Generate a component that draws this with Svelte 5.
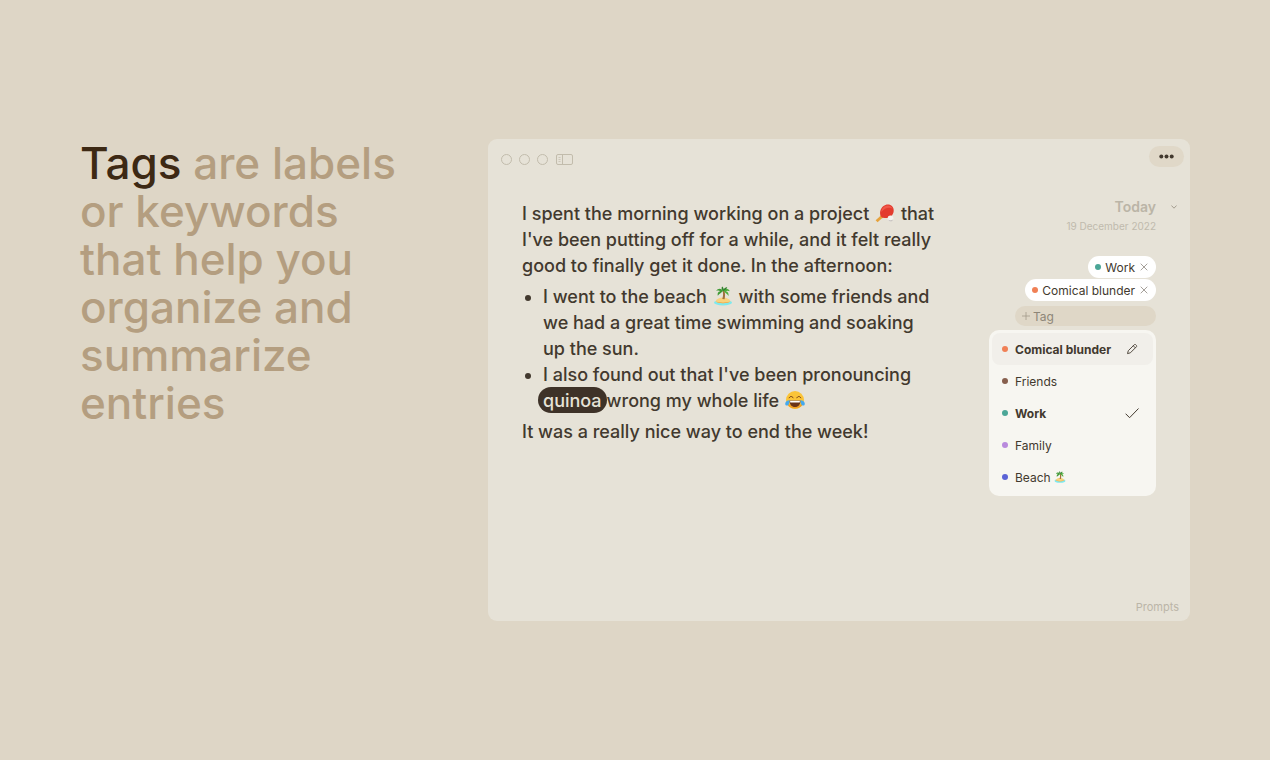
<script lang="ts">
  type Tag = { name: string; color: string; beach?: boolean };

  const tags: Tag[] = [
    { name: 'Comical blunder', color: '#f08056' },
    { name: 'Friends', color: '#875f4d' },
    { name: 'Work', color: '#4ba697' },
    { name: 'Family', color: '#b98add' },
    { name: 'Beach', color: '#5b63d6', beach: true },
  ];

  let selected = $state(['Work', 'Comical blunder']);
  let highlighted = $state('Comical blunder');

  const colorOf = (name: string) => tags.find((t) => t.name === name)?.color;

  function toggle(name: string) {
    highlighted = name;
    selected = selected.includes(name)
      ? selected.filter((n) => n !== name)
      : [...selected, name];
  }
</script>

{#snippet island()}
  <svg class="emoji" viewBox="0 0 20 20" role="img" aria-label="beach with palm tree">
    <ellipse cx="10" cy="16.5" rx="9" ry="3" fill="#7fe9ee" />
    <path d="M2.500 15.500c1.500-3 4-4 7.500-4s6 1 7.500 4c-3 2.300-12 2.300-15 0z" fill="#f9d27c" />
    <path d="M3 15.500c4 1.500 10 1.500 14 0-2 2.300-12 2.300-14 0z" fill="#eb9a38" />
    <path d="M9.300 13c1-3 1-6 .2-8.500l1.800-.2c1 3 .9 6 .3 8.900z" fill="#a0703c" />
    <path d="M10.300 4.800C8 1.800 4.800 2 3.200 5c2-.8 3.200-.4 4 .2C5 5.500 4.200 7.200 4.800 9.800 6.500 7.500 8.500 6.800 10.300 4.800z" fill="#3f9a35" />
    <path d="M10.300 4.800C12.500 1.800 15.700 2.200 16.800 5.200c-1.800-.9-3-.6-4 0 2.200.4 3 2.200 2.700 4.800C13.800 7.500 12 6.800 10.300 4.800z" fill="#4fae3d" />
    <path d="M10.300 5C8.500 3.500 8 1.500 9.300.5c1 .8 1.300 2 1.400 3C11.500 2 12.700 1 14.300 1.300c-.8 1.700-2 3-4 3.700z" fill="#2f822c" />
  </svg>
{/snippet}

<main>
  <h1><strong>Tags</strong> are labels or keywords that help you organize and summarize entries</h1>

  <section class="window" aria-label="Journal entry">
    <header class="titlebar">
      <div class="controls">
        <button class="light" aria-label="Close"></button>
        <button class="light" aria-label="Minimize"></button>
        <button class="light" aria-label="Zoom"></button>
        <button class="panel-toggle" aria-label="Toggle sidebar">
          <svg viewBox="0 0 17 11" fill="none" stroke="currentColor">
            <rect x=".5" y=".5" width="16" height="10" rx="1.500" />
            <path d="M6.500.5v10" />
            <path d="M2.500 3.500h2M2.500 5.500h2M2.500 7.500h2" stroke-width=".7" />
          </svg>
        </button>
      </div>
      <button class="more" aria-label="More">
        <svg viewBox="0 0 15 5" fill="currentColor">
          <circle cx="2.300" cy="2.500" r="2" />
          <circle cx="7.500" cy="2.500" r="2" />
          <circle cx="12.700" cy="2.500" r="2" />
        </svg>
      </button>
    </header>

    <div class="body">
      <article>
        <p>
          I spent the morning working on a project
          <svg class="emoji" viewBox="0 0 20 20" role="img" aria-label="ping pong">
            <path d="M6.300 11.500l2.700 2.700-2.600 1.600-3.800 3.500-2-2 3.700-3.400z" fill="#e6a23c" />
            <path d="M6 13.500C3.700 9 6 3.500 10.500 1.900c4.500-1.500 8.500 1.500 8.200 6-.3 4.300-3.700 7.300-7.700 7.100-2-.1-3.500.2-5-1.500z" fill="#e33b2e" />
            <path d="M6.200 9C6.500 5.500 9 2.800 12.300 2.400c2.500-.2 4.700 1.200 5.400 3.300-3.500-2-8-.9-11.500 3.300z" fill="#f0584a" />
            <circle cx="15.500" cy="15.500" r="2.900" fill="#f4f1ee" />
            <path d="M13 16.500c1.300 1 3.300.9 5.200-.1-.8 2.700-4.400 2.700-5.200.1z" fill="#c9c4c0" />
          </svg>
          that I've been putting off for a while, and it felt really good to finally get it done. In the
          afternoon:
        </p>
        <ul>
          <li>
            I went to the beach {@render island()} with some friends and we had a great time swimming and
            soaking up the sun.
          </li>
          <li>
            I also found out that I've been pronouncing <mark>quinoa</mark>wrong my whole life
            <svg class="emoji" viewBox="0 0 20 20" role="img" aria-label="tears of joy">
              <circle cx="10" cy="10" r="9" fill="#fbc437" />
              <path d="M1.500 12.500a9 9 0 0017 0c-3 4-14 4-17 0z" fill="#f0a024" />
              <path d="M4.500 10.500h11c0 4-2 6.500-5.500 6.500s-5.500-2.500-5.500-6.500z" fill="#6b3317" />
              <path d="M5 10.700h10l-.3 1.900H5.300z" fill="#fff" />
              <path d="M4.200 7.800c.8-1.800 3-1.800 3.900 0M11.900 7.800c.8-1.800 3-1.800 3.900 0" fill="none" stroke="#6b3317" stroke-linecap="round" />
              <path d="M4.600 10.200C2 10.200.2 11.800.2 13.700c0 1.500 1.300 2.300 2.500 1.700 1.300-.7 1.800-2.700 1.900-5.200z" fill="#45a9ee" />
              <path d="M15.400 10.200c2.600 0 4.400 1.600 4.400 3.500 0 1.500-1.300 2.300-2.500 1.700-1.300-.7-1.800-2.700-1.900-5.200z" fill="#45a9ee" />
            </svg>
          </li>
        </ul>
        <p>It was a really nice way to end the week!</p>
      </article>

      <aside>
        <h2>Today</h2>
        <time datetime="2022-12-19">19 December 2022</time>

        <ul class="chips">
          {#each selected as name (name)}
            <li class="chip">
              <span class="dot" style="background: {colorOf(name)}"></span>
              {name}
              <button aria-label="Remove {name}" onclick={() => toggle(name)}>
                <svg viewBox="0 0 8 8" fill="none" stroke="currentColor" stroke-width=".8">
                  <path d="M.7.7l6.600 6.600M7.300.7L.7 7.300" />
                </svg>
              </button>
            </li>
          {/each}
        </ul>

        <label class="tag-field">
          <svg viewBox="0 0 8 8" fill="none" stroke="currentColor" stroke-width=".8" aria-hidden="true">
            <path d="M4 0v8M0 4h8" />
          </svg>
          <input type="text" placeholder="Tag" aria-label="Tag" />
        </label>

        <ul class="menu">
          {#each tags as tag (tag.name)}
            <li>
              <button
                class="option"
                class:highlighted={highlighted === tag.name}
                class:selected={selected.includes(tag.name)}
                onclick={() => toggle(tag.name)}
              >
                <span class="dot" style="background: {tag.color}"></span>
                <span class="option-name">{tag.name}{#if tag.beach}{' '}{@render island()}{/if}</span>
                {#if highlighted === tag.name}
                  <svg class="option-icon" viewBox="0 0 14 14" fill="none" stroke="currentColor">
                    <path d="M2.500 11.600l.8-2.900 5.900-5.900c.5-.5 1.100-.5 1.600 0l.5.5c.5.5.5 1.100 0 1.600l-5.900 5.900zM8.300 3.800l2 2" stroke-width=".9" stroke-linejoin="round" />
                  </svg>
                {:else if selected.includes(tag.name)}
                  <svg class="option-icon" viewBox="0 0 14 14" fill="none" stroke="currentColor">
                    <path d="M.6 7.700l4 4L13.500 2.500" />
                  </svg>
                {/if}
              </button>
            </li>
          {/each}
        </ul>
      </aside>

      <button class="expand" aria-label="Change date">
        <svg viewBox="0 0 6 4" fill="none" stroke="currentColor">
          <path d="M.4.500L3 3.200 5.600.5" />
        </svg>
      </button>
    </div>

    <footer><button class="prompts">Prompts</button></footer>
  </section>
</main>

<style>
  :global(body) {
    margin: 0;
    background: #ded6c6;
  }
  main {
    box-sizing: border-box;
    min-height: 100vh;
    padding: 40px 80px;
    display: grid;
    grid-template-columns: minmax(300px, 408fr) minmax(0, 702fr);
    align-content: center;
    color: #42392e;
    font-family: Inter, sans-serif;
  }
  h1,
  h2,
  p,
  ul {
    margin: 0;
    padding: 0;
  }
  button {
    padding: 0;
    border: 0;
    background: none;
    color: inherit;
    font: inherit;
    cursor: pointer;
  }
  svg {
    display: block;
  }
  h1 {
    max-width: 340px;
    color: #b49e80;
    font-size: 44px;
    line-height: 48px;
    font-weight: 500;
  }
  h1 strong {
    color: #3d2914;
    font-weight: 500;
  }
  .window {
    min-height: 482px;
    display: flex;
    flex-direction: column;
    border-radius: 9px;
    background: #e6e2d7;
  }

  /* Title bar */
  .titlebar {
    display: flex;
    justify-content: space-between;
    padding: 7px 6px 0 13px;
  }
  .controls {
    display: flex;
    align-items: center;
    gap: 7px;
    height: 27px;
    color: #c2bcac;
  }
  .light {
    box-sizing: border-box;
    width: 11px;
    height: 11px;
    border: 1px solid currentColor;
    border-radius: 50%;
  }
  .panel-toggle {
    width: 17px;
    margin-left: 1px;
  }
  .more {
    display: grid;
    place-items: center;
    width: 35px;
    height: 21px;
    border-radius: 11px;
    background: #e0d8c8;
  }
  .more svg {
    width: 15px;
  }

  /* Entry */
  .body {
    flex: 1;
    display: grid;
    grid-template-columns: minmax(0, 1fr) 167px 34px;
    padding: 24px 0 0 34px;
  }
  article {
    padding: 4px 41px 0 0;
    font-size: 18px;
    line-height: 26px;
    font-weight: 500;
  }
  article ul {
    margin: 5px 0;
    padding: 0 14px 0 21px;
  }
  .emoji {
    display: inline-block;
    width: 12px;
    height: 12px;
    vertical-align: -1px;
  }
  article .emoji {
    width: 20px;
    height: 20px;
    margin: 0 1px;
    vertical-align: -3px;
  }
  mark {
    margin-left: -5px;
    padding: 3px 5px 2px;
    border-radius: 14px;
    background: #3e3228;
    color: #e6e2d7;
  }

  /* Date and tags */
  aside {
    display: flex;
    flex-direction: column;
    align-items: flex-end;
    font-size: 12px;
  }
  h2 {
    color: #bbb5a7;
    font-size: 14px;
    line-height: 20px;
    font-weight: 600;
  }
  time {
    color: #c0baad;
    font-size: 10px;
    line-height: 18px;
  }
  .chips {
    display: flex;
    flex-direction: column;
    align-items: flex-end;
    gap: 1px;
    margin: 21px 0 5px;
    list-style: none;
  }
  .chip {
    display: flex;
    align-items: center;
    gap: 4px;
    height: 22px;
    padding: 0 8px 0 7px;
    border-radius: 11px;
    background: #fff;
  }
  .chip button {
    width: 8px;
    margin-left: 1px;
    color: #8e8880;
  }
  .dot {
    flex: none;
    width: 6px;
    height: 6px;
    border-radius: 50%;
  }
  .tag-field {
    box-sizing: border-box;
    display: flex;
    align-items: center;
    gap: 3px;
    width: 141px;
    height: 20px;
    padding: 0 7px;
    border-radius: 10px;
    background: #dfd7c7;
    color: #a29a8b;
  }
  .tag-field svg {
    flex: none;
    width: 8px;
  }
  input {
    min-width: 0;
    padding: 0;
    border: 0;
    outline: 0;
    background: none;
    color: inherit;
    font: inherit;
  }
  input::placeholder {
    color: #8e8678;
  }
  .menu {
    box-sizing: border-box;
    width: 100%;
    margin-top: 4px;
    padding: 3px;
    border-radius: 10px;
    background: #f7f6f1;
    list-style: none;
  }
  .option {
    display: flex;
    align-items: center;
    gap: 7px;
    width: 100%;
    height: 32px;
    padding: 0 14px 0 10px;
    border-radius: 8px;
    text-align: left;
  }
  .option.highlighted {
    background: #f1efea;
  }
  .option.selected {
    font-weight: 700;
  }
  .option-name {
    flex: 1;
    white-space: nowrap;
  }
  .option-icon {
    width: 14px;
  }
  .expand {
    display: grid;
    place-items: center;
    width: 14px;
    height: 20px;
    margin-left: 11px;
    color: #a39c8e;
  }
  .expand svg {
    width: 6px;
  }
  footer {
    display: flex;
    justify-content: flex-end;
    padding: 0 11px 6px;
  }
  .prompts {
    color: #bbb5a7;
    font-size: 11px;
    line-height: 16px;
  }
</style>
